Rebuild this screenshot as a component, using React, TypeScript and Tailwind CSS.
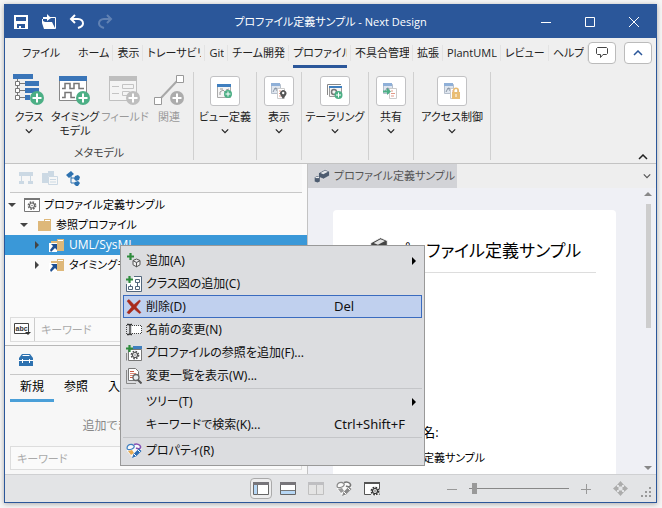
import React, { useState } from "react";
import clsx from "clsx";

type IconProps = { className?: string };

const SaveIcon = () => (
  <svg width="16" height="16" viewBox="0 0 16 16" fill="#fff">
    <path fillRule="evenodd" d="M1 1h14v14H1zM3 3v4h10V3zM4 10v4h2v-2h2v2h4v-4z" />
  </svg>
);

const OpenIcon = () => (
  <svg width="16" height="16" viewBox="0 0 16 16" fill="#fff">
    <path d="M1 5h1v2l2 1h7l3 6v1H3L1 9z" />
    <path d="M9 3.500h5.500v11H3" fill="none" stroke="#fff" />
    <path d="M2 5V3h4V0l4 4-4 3V5z" />
  </svg>
);

const UndoIcon = ({ className }: IconProps) => (
  <svg width="16" height="16" viewBox="0 0 16 16" fill="none" stroke="#fff" strokeWidth="2" className={className}>
    <path d="M6 1 2 5l4 4M2 5h7c3 0 5 2 5 4.500S12 13 9 14" />
  </svg>
);

const Chevron = ({ up, className }: IconProps & { up?: boolean }) => (
  <svg width="10" height="6" viewBox="0 0 10 6" fill="none" stroke="currentColor" strokeWidth="1.500" className={className}>
    <path d={up ? "M1 5l4-4 4 4" : "M1 1l4 4 4-4"} />
  </svg>
);

const PlusBadge = ({ color, x = 24, y = 24 }: { color: string; x?: number; y?: number }) => (
  <g>
    <circle cx={x} cy={y} r="7" fill={color} />
    <path d={`M${x - 4.5} ${y}h9M${x} ${y - 4.5}v9`} stroke="#fff" strokeWidth="2" />
  </g>
);

const ClassIcon = () => (
  <svg width="32" height="32" viewBox="0 0 32 32">
    <path d="M0 0h20v5H0zM12 7h14v5H12zM12 14h14v5H12zM12 21h5v5h-5z" fill="#3a75b8" />
    <path d="M4.500 5v18M6 9.500h6M6 16.500h6M6 23.500h6" stroke="#777" fill="none" />
    <path d="M2.500 7.500h4v4h-4zM2.500 14.500h4v4h-4zM2.500 21.500h4v4h-4z" stroke="#777" fill="#fff" />
    <PlusBadge color="#4caf85" />
  </svg>
);

const TimingIcon = () => (
  <svg width="32" height="32" viewBox="0 0 32 32">
    <path d="M.5 2.500h27v24H.5z" fill="#fff" stroke="#888" />
    <path d="M0 2h28v5H0z" fill="#3a75b8" />
    <path d="M3 14.500h3v-5h5v5h4v-5h5v5h5M3 23.500h3v-5h6v5h4" fill="none" stroke="#777" strokeWidth="1.500" />
    <PlusBadge color="#4caf85" />
  </svg>
);

const FieldIcon = () => (
  <svg width="32" height="32" viewBox="0 0 32 32">
    <path d="M.5 2.500h27v24H.5z" fill="#f4f4f4" stroke="#c0c0c0" />
    <path d="M0 2h28v5H0z" fill="#bebebe" />
    <path d="M3 12.500h7M13.500 10.500h11v4h-11zM3 19.500h7M13.500 17.500h7v4h-7z" fill="none" stroke="#c4c4c4" />
    <PlusBadge color="#bebebe" />
  </svg>
);

const RelationIcon = () => (
  <svg width="32" height="32" viewBox="0 0 32 32">
    <path d="M7 25 24 7" stroke="#a8a8a8" strokeWidth="2" />
    <path d="M23.500 1.500h7v7h-7zM1.500 23.500h7v7h-7z" fill="#fff" stroke="#999" />
    <PlusBadge color="#acacac" />
  </svg>
);

const ViewDefIcon = () => (
  <svg width="16" height="16" viewBox="0 0 16 16">
    <path d="M.5 2.500h13v12H.5z" fill="#f5f5f5" stroke="#aaa" />
    <path d="M0 1h14v3H0z" fill="#3f7fbf" />
    <path d="M3 12V9l3-2 2 2M3 6h3M9 7l3-1" stroke="#999" fill="none" />
    <circle cx="11" cy="11" r="4" fill="#4caf85" />
    <path d="M8.500 11h5M11 8.500v5" stroke="#fff" />
  </svg>
);

const DocStack = () => (
  <g>
    <path d="M.5 1.500h9v9h-9z" fill="#dfe6ef" stroke="#b5bfcc" />
    <path d="M0 0h9v3H0z" fill="#8fb0d8" />
    <path d="M2 9l2-4 3 4M4 5l4 1" fill="none" stroke="#8a96a5" />
    <path d="M6.500 5.500h7v10h-7z" fill="#fff" stroke="#ccc" />
    <path d="M8 8h2M8 10.500h4M8 13h3" stroke="#e29a88" />
  </g>
);

const DisplayIcon = () => (
  <svg width="16" height="16" viewBox="0 0 16 16">
    <DocStack />
    <path d="M12 16l-2.500-4a3.200 3.200 0 1 1 5.500 0z" fill="#555" />
    <circle cx="12.200" cy="10" r="1.200" fill="#fff" />
  </svg>
);

const TailoringIcon = () => (
  <svg width="16" height="16" viewBox="0 0 16 16">
    <path d="M.5 12V1.500H14" fill="none" stroke="#888" />
    <path d="M2.500 4.500h12v9h-12z" fill="#f5f5f5" stroke="#999" />
    <path d="M2 3h13v2H2z" fill="#3f7fbf" />
    <circle cx="7" cy="9" r="2.500" fill="none" stroke="#777" strokeWidth="1.500" />
    <circle cx="11.500" cy="12" r="4" fill="#4caf85" />
    <path d="M9 12h5M11.500 9.500v5" stroke="#fff" />
  </svg>
);

const ShareIcon = () => (
  <svg width="16" height="16" viewBox="0 0 16 16">
    <DocStack />
    <path d="M0 7.500h4V5l4 3.500L4 12V9.500H0z" fill="#4caf85" />
  </svg>
);

const AccessIcon = () => (
  <svg width="16" height="16" viewBox="0 0 16 16">
    <DocStack />
    <path d="M8 9h8v7H8z" fill="#e9bd74" />
    <path d="M9.700 9V7.500a2.300 2.300 0 0 1 4.600 0V9" fill="none" stroke="#e9bd74" strokeWidth="1.500" />
    <path d="M12 11v3" stroke="#fff" />
  </svg>
);

const GearPath = ({ cx, cy, color = "#666" }: { cx: number; cy: number; color?: string }) => (
  <g fill="none" stroke={color}>
    <circle cx={cx} cy={cy} r="3.600" strokeWidth="1.600" strokeDasharray="1.600 1.230" />
    <circle cx={cx} cy={cy} r="2.500" strokeWidth="1.200" />
    <circle cx={cx} cy={cy} r=".7" fill={color} stroke="none" />
  </g>
);

const ModelIcon = () => (
  <svg width="16" height="14" viewBox="0 0 16 14">
    <path d="M.5.500h15v13H.5z" fill="#fff" stroke="#777" />
    <path d="M0 0h16v2H0z" fill="#777" />
    <GearPath cx={8} cy={7.5} />
  </svg>
);

const FolderIcon = ({ linked }: { linked?: boolean }) => (
  <svg width="16" height="14" viewBox="0 0 16 14">
    <path d="M2 3h6V1h7v12H2z" fill="#deb87a" />
    <path d="M9 2.500h5" stroke="#fff" />
    {linked && (
      <>
        <path d="M0 5h8v9H0z" fill="#fff" />
        <path d="M2 6h6v6L6 10l-4 4-1-2 3-4z" fill="#1d4f93" />
      </>
    )}
  </svg>
);

const TreeArrow = ({ open }: { open?: boolean }) => (
  <svg width="8" height="8" viewBox="0 0 8 8" fill="#444">
    <path d={open ? "M0 2h8L4 6z" : "M2 0v8l4-4z"} />
  </svg>
);

const HierarchyIcon = () => (
  <svg width="16" height="14" viewBox="0 0 16 14" fill="#ccd9e4">
    <path d="M1 1h14v4H1zM1 10h5v3H1zM10 10h5v3h-5zM3 5h1v5H3zM12 5h1v5h-1z" />
  </svg>
);

const PagesIcon = () => (
  <svg width="16" height="14" viewBox="0 0 16 14" fill="#ccd9e4">
    <path d="M0 2h6V0h6v5H6v7H0z" />
    <path d="M6.500 5.500h9v8h-9z" fill="#f7f7f7" stroke="#ccd9e4" />
    <path d="M8 8h6v1H8zM8 10.500h6v1H8z" />
  </svg>
);

const NodesIcon = () => (
  <svg width="15" height="15" viewBox="0 0 15 15" fill="#2e72b0">
    <path d="M0 4l5-4 3 3-5 4zM9 5l3-1 2 2-1 3-3 1-2-2zM9 11l3-1 2 2-2 3h-2l-2-2z" />
    <path d="M5 4v8h5M5 7h5" fill="none" stroke="#2e72b0" />
  </svg>
);

const ToolboxIcon = () => (
  <svg width="16" height="14" viewBox="0 0 16 14">
    <path d="M4 1h8l3 4v8H1V5z" fill="#2e72b0" />
    <path d="M4.500 2.500h7" stroke="#fff" />
    <path d="M1 7.500h14" stroke="#fff" />
    <path d="M4.500 6v4M11.500 6v4" stroke="#fff" />
  </svg>
);

const BlocksIcon = ({ className, color = "#4d5c70" }: IconProps & { color?: string }) => (
  <svg viewBox="0 0 16 14" className={className}>
    <path d="M4.500 4 11 .5l4.500 2v4.200L9.500 10l-5-2z" fill={color} stroke="#fff" strokeWidth=".5" />
    <path d="M6.500 4 11 1.500l3 1.200L9.300 5.200z" fill="#fff" opacity=".85" />
    <path d="M.7 8.200 3 7.300l2.800.7v4.500l-2.300 1-2.800-1z" fill={color} />
    <path d="M1.500 8.600h3.500" stroke="#fff" />
  </svg>
);

const GreenPlus = () => <path d="M0 3.500h7M3.500 0v7" stroke="#2e8b3c" strokeWidth="2.200" />;

const AddIcon = () => (
  <svg width="16" height="16" viewBox="0 0 16 16">
    <path d="M10.500 6 14 7.500v4.300l-3.500 2-3.500-2V7.500zM7 7.700l3.500 1.800L14 7.700M10.500 9.500V14" fill="#eee" stroke="#555" />
    <g transform="translate(1 0)"><GreenPlus /></g>
  </svg>
);

const ClassDiagramIcon = () => (
  <svg width="16" height="16" viewBox="0 0 16 16">
    <path d="M8 .5h7.500v15H.5V8" fill="#fff" stroke="#53677d" />
    <path d="M9.500 3.500h4v3h-4zM2.500 10.500h4v3h-4zM9.500 10.500h4v3h-4zM11.500 6v4M4.500 10V8.500" fill="none" stroke="#53677d" />
    <GreenPlus />
  </svg>
);

const DeleteIcon = () => (
  <svg width="16" height="16" viewBox="0 0 16 16">
    <path d="M1 2 3 .5l5 5.200L13.500 1l1 1L10 8l5 5.500-1.500 1L8.200 10 3 15l-2-1.500L5.800 8z" fill="#a92b1b" stroke="#a92b1b" strokeWidth=".5" />
  </svg>
);

const RenameIcon = () => (
  <svg width="16" height="16" viewBox="0 0 16 16" fill="none">
    <path d="M6 3.500h9.500v8H6" stroke="#444" strokeDasharray="1 1" fill="#fff" />
    <path d="M1 2.500h2l1 1 1-1h1M1 12.500h2l1-1 1 1h1M4 3.500v8" stroke="#333" strokeWidth="1.300" />
    <path d="M.5 3v10" stroke="#444" strokeDasharray="1 1" />
  </svg>
);

const ProfileAddIcon = () => (
  <svg width="16" height="16" viewBox="0 0 16 16">
    <path d="M2.500 4.500h13v11h-13z" fill="#fff" stroke="#777" />
    <path d="M7 1h9v3H7z" fill="#3f7fbf" />
    <GearPath cx={9} cy={10} color="#555" />
    <path d="M.5 8v7.500" stroke="#888" />
    <GreenPlus />
  </svg>
);

const ChangesIcon = () => (
  <svg width="16" height="16" viewBox="0 0 16 16">
    <path d="M.5 2v13.500H10" fill="none" stroke="#888" />
    <path d="M2.500.5h7l3 3v9h-10z" fill="#fff" stroke="#777" />
    <path d="M4 3.500h4M4 9.500h3" stroke="#c75a46" />
    <path d="M4 5.500h6M4 7.500h4" stroke="#d98978" />
    <circle cx="10" cy="9.500" r="3" fill="#e8eef2" stroke="#666" strokeWidth="1.300" />
    <path d="m12 12 3.500 3.500" stroke="#555" strokeWidth="2" />
  </svg>
);

const PropertyIcon = ({ gray }: { gray?: boolean }) => (
  <svg width="16" height="16" viewBox="0 0 16 16">
    <path d="M0 4 5 1l5 0 5 2 .5 4L9 15l-3-1-5-6z" fill="#fafafa" />
    <path d="M1 5c0-2 2-4 5-3.500S9 5 6 6 1 7 1 5z" fill="none" stroke={gray ? "#888" : "#3f7fbf"} strokeWidth="1.300" />
    <path d="M8 1.500c3-1 6 0 6.500 2S13 6.500 10 5" fill="none" stroke={gray ? "#777" : "#8552b3"} strokeWidth="1.500" />
    <path d="M2 8l4-1 2 3-3 2z" fill={gray ? "#999" : "#e7a94e"} />
    <path d="m6 15 1.500-4L13 5.500 15.500 8 10 13.500z" fill={gray ? "#888" : "#2a6db5"} />
    <path d="m8 11 2 2M12 7l2 2" stroke="#fff" />
  </svg>
);

const LeftPaneIcon = () => (
  <svg width="16" height="14" viewBox="0 0 16 14">
    <path d="M.5.500h15v12H.5z" fill="#fff" stroke="#666" />
    <path d="M0 0h16v3H0z" fill="#77757a" />
    <path d="M1 3h3v9H1z" fill="#b7d7f5" />
    <path d="M4.500 3v10" stroke="#777" />
  </svg>
);

const BottomPaneIcon = () => (
  <svg width="16" height="14" viewBox="0 0 16 14">
    <path d="M.5.500h15v12H.5z" fill="#fff" stroke="#666" />
    <path d="M0 0h16v3H0z" fill="#77757a" />
    <path d="M1 9h14v3H1z" fill="#b7d7f5" />
    <path d="M1 8.500h14" stroke="#777" />
  </svg>
);

const SplitPaneIcon = () => (
  <svg width="16" height="14" viewBox="0 0 16 14">
    <path d="M.5.500h15v12H.5z" fill="#e4e4e4" stroke="#c0c0c0" />
    <path d="M0 0h16v3H0z" fill="#bfbfc2" />
    <path d="M8.500 3v10" stroke="#bbb" />
  </svg>
);

const WindowGearIcon = () => (
  <svg width="16" height="14" viewBox="0 0 16 14">
    <path d="M.5.500h15v12H.5z" fill="#fff" stroke="#555" />
    <path d="M0 0h16v2H0z" fill="#555" />
    <circle cx="11" cy="9.500" r="5" fill="#eee" />
    <GearPath cx={11} cy={9} color="#333" />
  </svg>
);

const MoveIcon = () => (
  <svg width="15" height="15" viewBox="0 0 15 15" fill="#acacac">
    <path d="M7.500 0 11 4H9v2H6V4H4zM7.500 15 4 11h2V9h3v2h2zM0 7.500 4 4v2h2v3H4v2zM15 7.500 11 11V9H9V6h2V4z" />
    <path d="M5.500 5.500h4v4h-4z" fill="#e3e4e6" />
  </svg>
);

const AbcIcon = () => (
  <svg width="17" height="13" viewBox="0 0 17 13">
    <path d="M.5.500h14v10H.5z" fill="#fff" stroke="#444" />
    <text x="1.500" y="8" fontSize="7" fontWeight="700" fill="#333" fontFamily="Liberation Sans">abc</text>
    <path d="M11 9h6l-3 3z" fill="#333" />
  </svg>
);

const ribbonTabs = [
  "ホーム",
  "表示",
  "トレーサビリティ",
  "Git",
  "チーム開発",
  "プロファイル",
  "不具合管理",
  "拡張",
  "PlantUML",
  "レビュー",
  "ヘルプ",
];

const metaTools = [
  { label: ["クラス"], icon: <ClassIcon />, width: "w-[42px]", arrow: true },
  { label: ["タイミング", "モデル"], icon: <TimingIcon />, width: "w-[50px]" },
  { label: ["フィールド"], icon: <FieldIcon />, width: "w-[50px]", disabled: true },
  { label: ["関連"], icon: <RelationIcon />, width: "w-[38px]", disabled: true },
];

const ribbonGroups = [
  { label: "ビュー定義", icon: <ViewDefIcon />, width: "w-[63px]" },
  { label: "表示", icon: <DisplayIcon />, width: "w-[45px]" },
  { label: "テーラリング", icon: <TailoringIcon />, width: "w-[67px]" },
  { label: "共有", icon: <ShareIcon />, width: "w-[45px]" },
  { label: "アクセス制御", icon: <AccessIcon />, width: "w-[77px]" },
];

const treeRows = [
  { label: "プロファイル定義サンプル", icon: <ModelIcon />, open: true, indent: "pl-[3px]" },
  { label: "参照プロファイル", icon: <FolderIcon />, open: true, indent: "pl-[15px]" },
  { label: "UML/SysML", icon: <FolderIcon linked />, indent: "pl-[28px]", selected: true },
  { label: "タイミングモデル", icon: <FolderIcon linked />, indent: "pl-[28px]" },
];

type MenuItem = {
  label: string;
  icon?: React.ReactNode;
  shortcut?: string;
  submenu?: boolean;
  active?: boolean;
};

const menuSections: MenuItem[][] = [
  [
    { label: "追加(A)", icon: <AddIcon />, submenu: true },
    { label: "クラス図の追加(C)", icon: <ClassDiagramIcon /> },
    { label: "削除(D)", icon: <DeleteIcon />, shortcut: "Del", active: true },
    { label: "名前の変更(N)", icon: <RenameIcon /> },
    { label: "プロファイルの参照を追加(F)...", icon: <ProfileAddIcon /> },
    { label: "変更一覧を表示(W)...", icon: <ChangesIcon /> },
  ],
  [
    { label: "ツリー(T)", submenu: true },
    { label: "キーワードで検索(K)...", shortcut: "Ctrl+Shift+F" },
  ],
  [{ label: "プロパティ(R)", icon: <PropertyIcon /> }],
];

function TitleBar() {
  return (
    <header className="flex h-[33px] shrink-0 items-center bg-[#2b579a] text-white">
      <div className="flex items-center gap-3 pl-2">
        <button aria-label="保存"><SaveIcon /></button>
        <button aria-label="開く"><OpenIcon /></button>
        <button aria-label="元に戻す"><UndoIcon /></button>
        <button aria-label="やり直し"><UndoIcon className="-scale-x-100 opacity-25" /></button>
      </div>
      <h1 className="flex-1 pl-6 text-center text-[11px]">プロファイル定義サンプル - Next Design</h1>
      <div className="flex">
        {["M0 5.500h10", "M.5.500h9v9h-9z", "M0 0l10 10M10 0 0 10"].map((d, i) => (
          <button key={d} aria-label={["最小化", "最大化", "閉じる"][i]} className="flex w-11 justify-center">
            <svg width="10" height="10" viewBox="0 0 10 10" fill="none" stroke="#fff">
              <path d={d} />
            </svg>
          </button>
        ))}
      </div>
    </header>
  );
}

function RibbonTabs() {
  const [active, setActive] = useState("プロファイル");

  return (
    <nav className="flex h-[30px] shrink-0 items-center text-[11px] text-[#222]">
      <button className="w-[69px] shrink-0 pl-[17px] text-left">ファイル</button>
      {ribbonTabs.map((tab) => (
        <div key={tab} className="flex h-full shrink-0 items-center">
          <button
            onClick={() => setActive(tab)}
            className={clsx(
              "mr-[3px] ml-1 h-full max-w-[54px] overflow-hidden border-b-[3px] pt-[3px] text-left whitespace-nowrap",
              tab === active ? "border-[#2b579a]" : "border-transparent",
            )}
          >
            {tab}
          </button>
          <span className="h-4 w-px bg-[#e3e3e3]" />
        </div>
      ))}
      <div className="ml-auto flex shrink-0 gap-2 pr-[7px]">
        <button aria-label="コメント" className="flex h-[22px] w-7 items-center justify-center rounded-sm border border-[#bbb] bg-white">
          <svg width="12" height="12" viewBox="0 0 12 12" fill="none" stroke="#444">
            <path d="M1.500.500h9l1 1v5l-1 1H7l-2.500 3v-3h-3l-1-1v-5z" />
          </svg>
        </button>
        <button aria-label="折りたたむ" className="flex h-[22px] w-7 items-center justify-center rounded-sm border border-[#bbb] bg-white text-[#2b579a]">
          <Chevron up />
        </button>
      </div>
    </nav>
  );
}

function Ribbon() {
  return (
    <section className="flex h-24 shrink-0 border-b border-[#c3c3c3] pt-1 pb-[3px] text-[11px] leading-[14px] text-[#222]">
      <div className="flex w-[189px] shrink-0 flex-col border-r border-[#d0d0d0]">
        <div className="flex pt-0.5 pl-[3px]">
          {metaTools.map((tool) => (
            <button
              key={tool.label[0]}
              disabled={tool.disabled}
              className={clsx("flex shrink-0 flex-col items-center whitespace-nowrap", tool.width, tool.disabled && "text-[#999]")}
            >
              {tool.icon}
              <span className="pt-1">
                {tool.label.map((line) => (
                  <span key={line} className="block">{line}</span>
                ))}
              </span>
              {tool.arrow && <Chevron className="mt-1 w-2" />}
            </button>
          ))}
        </div>
        <span className="mt-auto text-center text-[#444]">メタモデル</span>
      </div>
      {ribbonGroups.map((group) => (
        <div key={group.label} className={clsx("flex shrink-0 justify-center border-r border-[#d0d0d0] pt-1", group.width)}>
          <button className="flex flex-col items-center self-start whitespace-nowrap">
            <span className="flex size-[30px] items-center justify-center rounded-[3px] border border-[#c2c2c4] bg-white">
              {group.icon}
            </span>
            <span className="pt-1">{group.label}</span>
            <Chevron className="mt-1 w-2" />
          </button>
        </div>
      ))}
      <button aria-label="リボンを閉じる" className="mt-auto mr-2 ml-auto">
        <Chevron up />
      </button>
    </section>
  );
}

function Explorer() {
  return (
    <section className="flex min-h-0 flex-1 flex-col">
      <div className="mx-[5px] flex h-[29px] shrink-0 items-center gap-2 border-b border-[#c8c8c8] bg-[#f7f7f7] pl-2">
        <button aria-label="階層"><HierarchyIcon /></button>
        <button aria-label="ページ"><PagesIcon /></button>
        <button aria-label="ノード"><NodesIcon /></button>
      </div>
      <ul className="flex-1 pt-[2px]">
        {treeRows.map((row) => (
          <li
            key={row.label}
            className={clsx(
              "flex h-5 items-center whitespace-nowrap",
              row.indent,
              row.selected ? "bg-[#3a98d8] text-xs text-white" : "text-[11px] text-black",
            )}
          >
            <TreeArrow open={row.open} />
            <span className="pr-1 pl-2">{row.icon}</span>
            {row.label}
          </li>
        ))}
      </ul>
      <label className="mx-[5px] mb-[3px] flex h-[25px] shrink-0 items-center border border-[#ddd] bg-[#fafafa] text-[11px]">
        <span className="flex h-full items-center border-r border-[#ccc] px-[3px]"><AbcIcon /></span>
        <input placeholder="キーワード" className="min-w-0 flex-1 px-1.5 outline-none placeholder:text-[#aaa]" />
      </label>
    </section>
  );
}

function Toolbox() {
  return (
    <section className="flex h-[129px] shrink-0 flex-col border-t border-[#b8b8b8] bg-[#f7f7f7] px-[5px] text-xs">
      <div className="flex h-[29px] shrink-0 items-center border-b border-[#c8c8c8] pl-2">
        <button aria-label="ツールボックス"><ToolboxIcon /></button>
      </div>
      <div className="flex h-[27px] shrink-0 text-black">
        {["新規", "参照", "入力"].map((tab, i) => (
          <button
            key={tab}
            className={clsx("w-11 border-b-[3px]", i === 0 ? "border-[#4a9fd8]" : "border-transparent")}
          >
            {tab}
          </button>
        ))}
      </div>
      <p className="flex flex-1 items-center justify-center pt-1 text-[#888]">追加できる要素はありません</p>
      <input
        aria-label="キーワード"
        placeholder="キーワード"
        className="mb-1 h-6 border border-[#ddd] bg-[#fafafa] px-1.5 text-[11px] outline-none placeholder:text-[#aaa]"
      />
    </section>
  );
}

function DocumentView() {
  return (
    <section className="flex min-w-0 flex-1 flex-col border-l border-[#c3c3c3]">
      <div className="flex h-6 shrink-0 items-center bg-[#eee] pr-[5px] text-[11px]">
        <div className="flex h-full items-center gap-1 bg-[#d2d3d7] pr-0.5 pl-1.5 whitespace-nowrap text-[#555]">
          <BlocksIcon className="w-4" />
          プロファイル定義サンプル
        </div>
        <button aria-label="タブ一覧" className="ml-auto text-[#555]"><Chevron className="w-2" /></button>
      </div>
      <div className="flex min-h-0 flex-1 bg-[#eff0f5]">
        <article className="mt-[22px] ml-[25px] flex min-w-0 flex-1 flex-col rounded-t-sm bg-white pr-5 pl-[31px] text-black">
          <h2 className="flex h-[63px] shrink-0 items-center gap-1.5 border-b border-[#ddd] pt-5 text-[17px] whitespace-nowrap">
            <BlocksIcon className="w-6 shrink-0 pb-2" color="#444" />
            プロファイル定義サンプル
          </h2>
          <div className="mt-auto pb-2">
            <p className="text-[13px] leading-6">プロダクト名:</p>
            <p className="pt-1.5 text-[11px]">プロファイル定義サンプル</p>
          </div>
        </article>
        <div className="flex w-10 shrink-0 flex-col items-end pt-1 pr-1 pb-1">
          <svg width="8" height="4" viewBox="0 0 8 4" fill="#888"><path d="M0 4h8L4 0z" /></svg>
          <span className="mt-2 mr-[1px] h-[124px] w-[5px] bg-[#cdcdcd]" />
          <svg width="8" height="4" viewBox="0 0 8 4" fill="#888" className="mt-auto"><path d="M0 0h8L4 4z" /></svg>
        </div>
      </div>
    </section>
  );
}

function ContextMenu() {
  return (
    <div role="menu" className="absolute top-[240px] left-[115px] w-[305px] border border-[#999] bg-[#dcdde0] px-0.5 py-[3px] font-['Noto_Sans','Noto_Sans_CJK_JP',sans-serif] text-xs text-[#111]">
      {menuSections.map((section, i) => (
        <div key={i} className={clsx(i > 0 && "mt-[1px] border-t border-[#c4c5c8] pt-[1px]")}>
          {section.map((item) => (
            <button
              key={item.label}
              role="menuitem"
              className={clsx(
                "flex h-[23px] w-full items-center border pl-0.5 text-left whitespace-nowrap",
                item.active ? "border-[#3a6bbf] bg-[#c0d0ee]" : "border-transparent",
              )}
            >
              <span className="w-5 shrink-0">{item.icon}</span>
              <span className="w-[188px]">{item.label}</span>
              <span className="w-[78px] text-[13px]">{item.shortcut}</span>
              {item.submenu && (
                <svg width="5" height="8" viewBox="0 0 5 8" fill="#000"><path d="M0 0v8l4-4z" /></svg>
              )}
            </button>
          ))}
        </div>
      ))}
    </div>
  );
}

function StatusBar() {
  const [zoom, setZoom] = useState(3);

  return (
    <footer className="flex h-7 shrink-0 items-center border-t border-[#cfd0d2] bg-[#e3e4e6] pr-1">
      <div className="ml-auto flex items-center gap-3">
        <button aria-label="左ペイン" className="-mr-1 flex h-[21px] w-[22px] items-center justify-center rounded-sm border border-[#aaa] bg-[#ededee]">
          <LeftPaneIcon />
        </button>
        <button aria-label="下ペイン"><BottomPaneIcon /></button>
        <button aria-label="分割"><SplitPaneIcon /></button>
        <button aria-label="プロパティ"><PropertyIcon gray /></button>
        <button aria-label="設定"><WindowGearIcon /></button>
      </div>
      <div className="ml-[67px] flex items-center gap-3">
        <button aria-label="縮小">
          <svg width="10" height="10" viewBox="0 0 10 10" stroke="#999"><path d="M0 5.500h10" /></svg>
        </button>
        <input
          type="range"
          aria-label="ズーム"
          value={zoom}
          onChange={(e) => setZoom(Number(e.target.value))}
          className="h-[11px] w-[100px] appearance-none bg-[linear-gradient(#888,#888)] bg-[length:100%_1px] bg-center bg-no-repeat [&::-webkit-slider-thumb]:h-[11px] [&::-webkit-slider-thumb]:w-[5px] [&::-webkit-slider-thumb]:appearance-none [&::-webkit-slider-thumb]:bg-[#999]"
        />
        <button aria-label="拡大">
          <svg width="10" height="10" viewBox="0 0 10 10" stroke="#999"><path d="M0 5.500h10M5.500 0v10" /></svg>
        </button>
      </div>
      <button aria-label="全体表示" className="ml-[22px]"><MoveIcon /></button>
      <svg width="11" height="11" viewBox="0 0 11 11" fill="#999" className="mb-1 ml-[13px] self-end">
        <path d="M8 0h2v2H8zM4 4h2v2H4zM8 4h2v2H8zM0 8h2v2H0zM4 8h2v2H4zM8 8h2v2H8z" />
      </svg>
    </footer>
  );
}

export default function App() {
  return (
    <div className="h-screen bg-[#f5f5f5] pt-1 pr-[5px] pb-[5px] pl-1 font-['Open_Sans','Noto_Sans_CJK_JP',sans-serif] leading-4 [font-feature-settings:'palt']">
      <div className="relative flex h-full flex-col border border-[#2b579a] bg-[#efefef] shadow-[0_1px_5px_rgba(0,0,0,0.3)]">
        <TitleBar />
        <RibbonTabs />
        <Ribbon />
        <main className="flex min-h-0 flex-1">
          <aside className="flex w-[302px] shrink-0 flex-col bg-[#fafafa]">
            <Explorer />
            <Toolbox />
          </aside>
          <DocumentView />
        </main>
        <StatusBar />
        <ContextMenu />
      </div>
    </div>
  );
}
